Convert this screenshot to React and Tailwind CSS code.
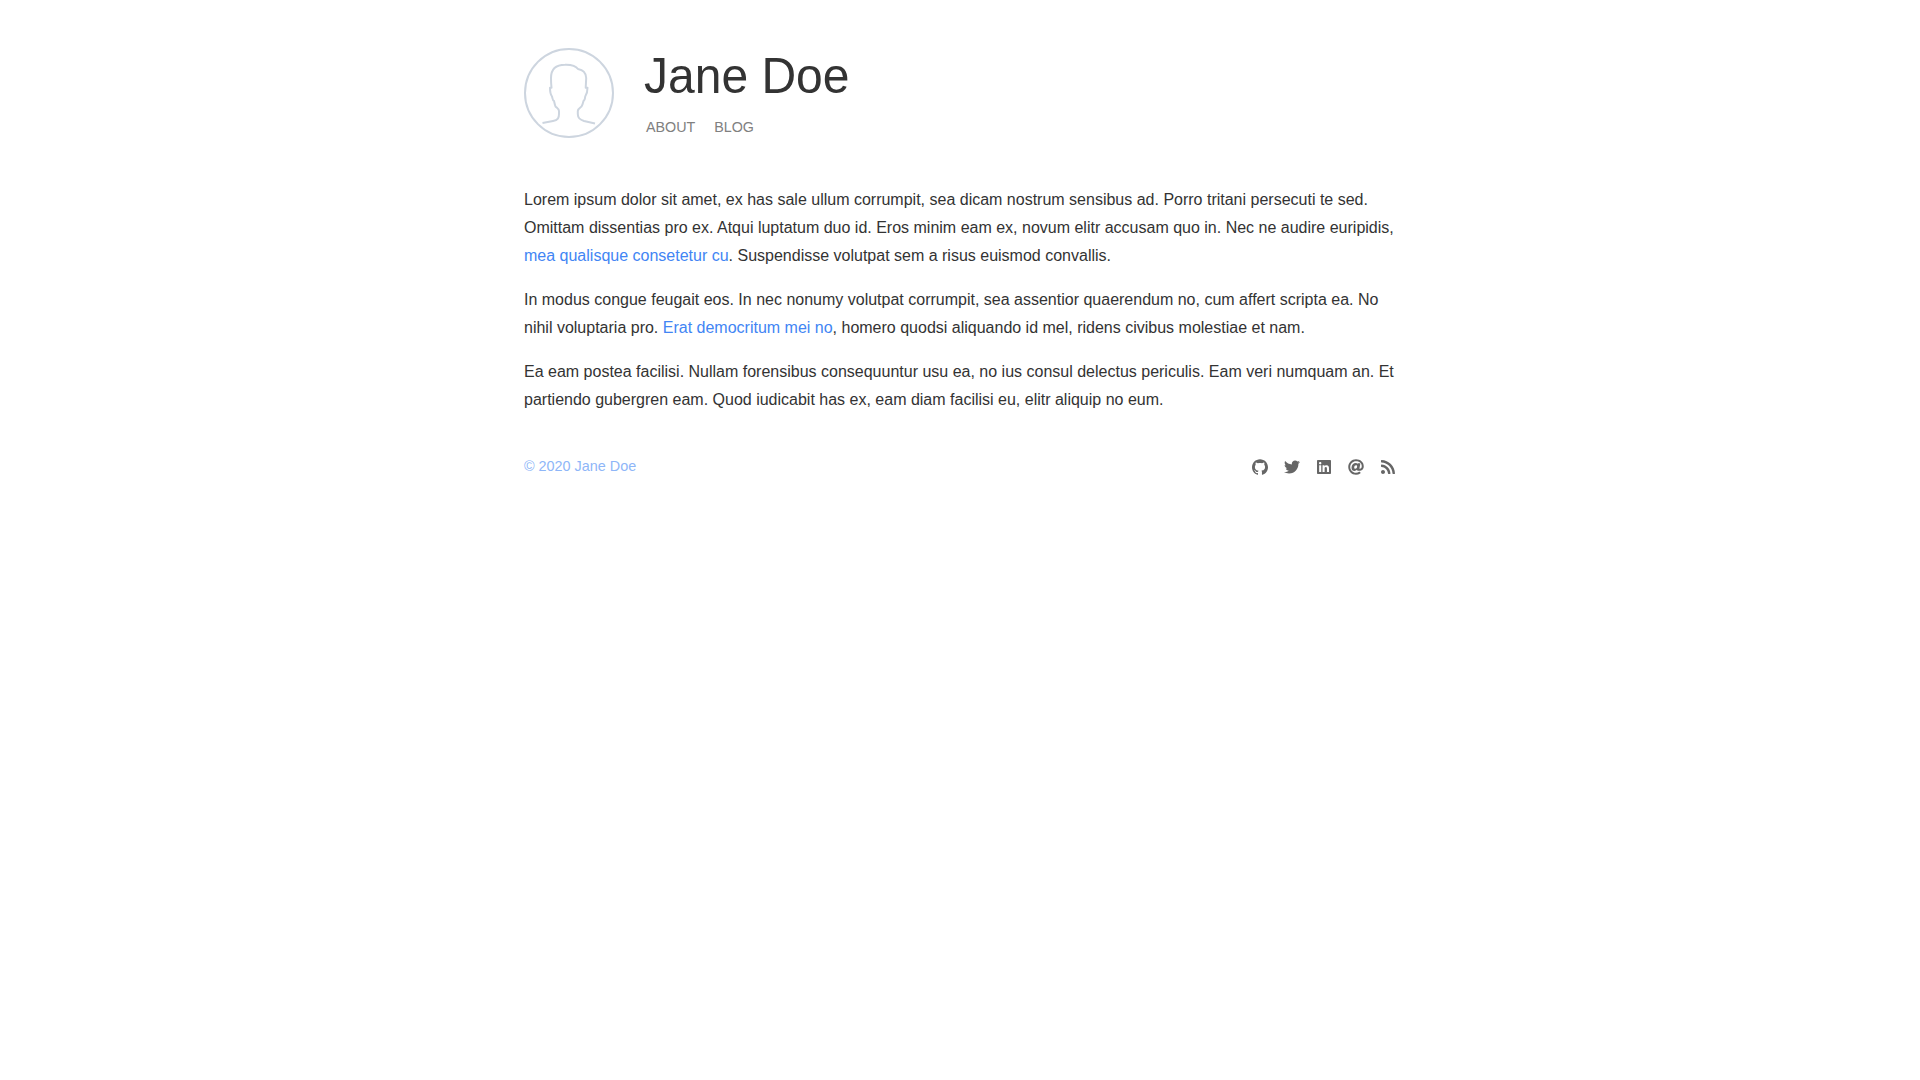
import { SiGithub } from "react-icons/si";
import { FaTwitter, FaLinkedin, FaAt, FaRss } from "react-icons/fa";

export default function App() {
  return (
    <div className="min-h-screen bg-white text-[#333] [font-family:'Liberation_Sans',Arial,sans-serif]">
      <div className="mx-auto w-[872px] pt-12">
        <header className="flex h-[90px] gap-[30px]">
          <svg className="size-[90px] shrink-0" viewBox="0 0 90 90" fill="none" stroke="#cdd5df" strokeWidth="2" strokeLinejoin="round">
            <circle cx="45" cy="45" r="44" />
            <path d="M18.5 75L29 73C34 72 35 70 35 66V63C35 61 33 60 31.500 58.500C30.500 56 30.500 54.500 30 53C28.500 52.500 28.500 50 28 48.500C26.500 46.500 26 42 26 39.700H27.500C27 36 27 33 27 30C27 22 31 16.700 41 16.700C48 16.500 52 18 54 21C60 22 62 25 62.200 30L61.700 39.700H63.500C63.500 43 63 46 61.200 48.500C61 51 60.500 52.500 59.500 53C59 55 58.500 57 57.500 58.500C55.500 60 54 61 53.800 63V66C53.800 70 55.500 71.500 60 73L71 75.500" />
          </svg>
          <div>
            <h1 className="origin-[0_79%] scale-y-[1.04] text-[48px] leading-[57px]">Jane Doe</h1>
            <nav className="mt-3 ml-0.5 flex gap-[19px] text-[14.3px] leading-5 text-[#808080]"><a>ABOUT</a><a>BLOG</a></nav>
          </div>
        </header>
        <main className="mt-12 space-y-4 text-base leading-7">
          <p>Lorem ipsum dolor sit amet, ex has sale ullum corrumpit, sea dicam nostrum sensibus ad. Porro tritani persecuti te sed. Omittam dissentias pro ex. Atqui luptatum duo id. Eros minim eam ex, novum elitr accusam quo in. Nec ne audire euripidis, <a className="text-[#4285f4]">mea qualisque consetetur cu</a>. Suspendisse volutpat sem a risus euismod convallis.</p>
          <p>In modus congue feugait eos. In nec nonumy volutpat corrumpit, sea assentior quaerendum no, cum affert scripta ea. No nihil voluptaria pro. <a className="text-[#4285f4]">Erat democritum mei no</a>, homero quodsi aliquando id mel, ridens civibus molestiae et nam.</p>
          <p>Ea eam postea facilisi. Nullam forensibus consequuntur usu ea, no ius consul delectus periculis. Eam veri numquam an. Et partiendo gubergren eam. Quod iudicabit has ex, eam diam facilisi eu, elitr aliquip no eum.</p>
        </main>
        <footer className="mt-[42px] flex items-center justify-between text-[14.4px] leading-5 text-[#8eb6f8]">
          <span>© 2020 Jane Doe</span>
          <div className="mt-0.5 flex gap-4 text-base text-[#666]"><SiGithub /><FaTwitter /><FaLinkedin /><FaAt /><FaRss /></div>
        </footer>
      </div>
    </div>
  );
}
